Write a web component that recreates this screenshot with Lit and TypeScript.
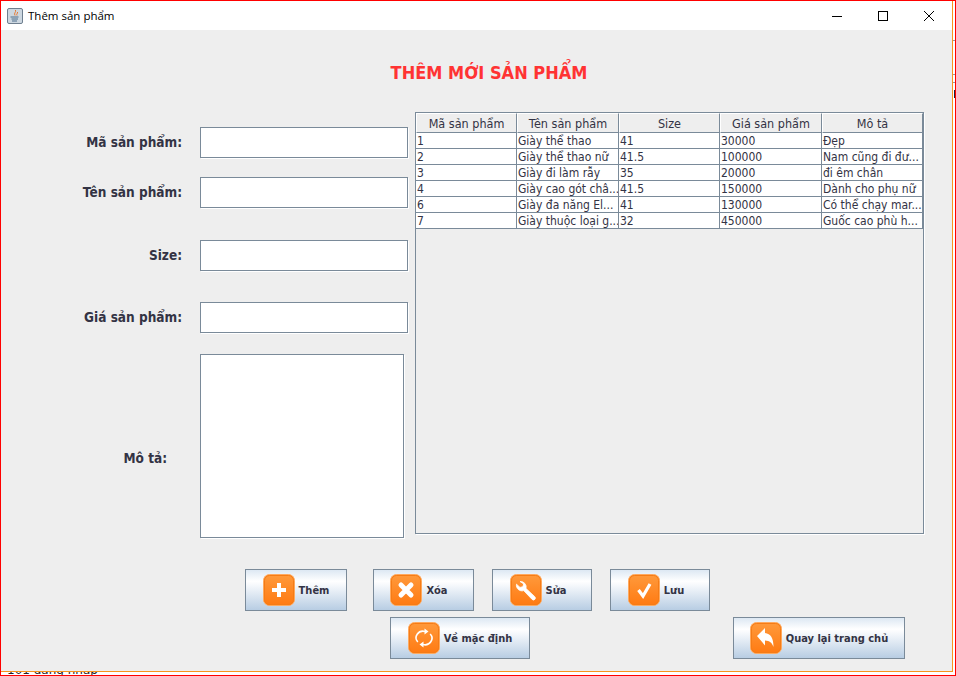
import { LitElement, html, css, svg } from 'lit';
import { customElement } from 'lit/decorators.js';

const ROWS = [
  ['1', 'Giày thể thao', '41', '30000', 'Đẹp'],
  ['2', 'Giày thể thao nữ', '41.5', '100000', 'Nam cũng đi đư...'],
  ['3', 'Giày đi làm rẫy', '35', '20000', 'đi êm chân'],
  ['4', 'Giày cao gót châ...', '41.5', '150000', 'Dành cho phụ nữ'],
  ['6', 'Giày đa năng El...', '41', '130000', 'Có thể chạy mar...'],
  ['7', 'Giày thuộc loại g...', '32', '450000', 'Guốc cao phù h...'],
];
const HEADERS = ['Mã sản phẩm', 'Tên sản phẩm', 'Size', 'Giá sản phẩm', 'Mô tả'];

const GLYPHS = {
  plus: svg`<path d="M9 14h5V9h4v5h5v4h-5v5h-4v-5H9z" fill="#fff"/>`,
  cross: svg`<path d="M11 11l10 10M21 11L11 21" stroke="#fff" stroke-width="5" stroke-linecap="round" fill="none"/>`,
  wrench: svg`<path d="M10 7.500a5.600 5.600 0 0 1 6 7l8.800 8.200a1.900 1.900 0 0 1-2.700 2.700l-8.400-8.800a5.600 5.600 0 0 1-7.200-6.400l3.500 3.200 2.900-.7.800-2.800z" fill="#fff" stroke="#fff" stroke-width=".8"/>`,
  check: svg`<path d="M10.500 16l4.500 6 7-12" stroke="#fff" stroke-width="3.200" fill="none"/>`,
  cycle: svg`<g fill="none" stroke="#fff" stroke-width="1.600"><path d="M9.800 20a7 6.500 0 0 1 7.200-10.500"/><path d="M22.200 12a7 6.500 0 0 1-7.200 10.500"/></g><path d="M16.500 6.500l4 3-4 3zM15.500 25.500l-4-3 4-3z" fill="#fff"/>`,
  back: svg`<path d="M7 14l8-8v5c5.500.5 8.500 5 8.500 14-1.500-4.500-3.800-6-8.500-6.500v5z" fill="#fff"/>`,
};

@customElement('app-root')
export class AppRoot extends LitElement {
  static styles = css`
    :host {
      display: block;
      position: relative;
      width: 956px;
      height: 676px;
      box-sizing: border-box;
      overflow: hidden;
      background: #fff;
      border: 1px solid #f00;
      font-family: "DejaVu Sans Condensed", "DejaVu Sans", sans-serif;
      font-stretch: condensed;
    }
    .window {
      position: relative;
      width: 952px;
      height: 671px;
      box-sizing: border-box;
      border-right: 1px solid #f7941d;
      border-bottom: 1px solid #f7941d;
      background: #eee;
      display: flex;
      flex-direction: column;
    }
    .titlebar {
      height: 29px;
      flex: none;
      background: #fff;
      display: flex;
      align-items: center;
      padding-left: 6px;
      font: 11.5px "Open Sans", sans-serif;
      color: #000;
    }
    .titlebar .app { width: 16px; height: 16px; margin-right: 5px; }
    .titlebar .name { flex: 1; }
    .winbtn { width: 46px; height: 29px; display: flex; align-items: center; justify-content: center; }
    .content { flex: 1; display: flex; flex-direction: column; }
    h1 {
      margin: 0;
      height: 82px;
      padding: 32px 0 0 25px;
      box-sizing: border-box;
      text-align: center;
      font-size: 18px;
      font-weight: bold;
      line-height: 22px;
      color: #ff3333;
    }
    .main { display: flex; height: 422px; }
    .form { width: 414px; flex: none; padding-top: 15px; box-sizing: border-box; }
    .field { display: flex; align-items: center; }
    .field label {
      width: 181px;
      margin-right: 18px;
      padding-bottom: 2px;
      text-align: right;
      font-size: 13.5px;
      font-weight: bold;
      color: #333344;
    }
    .input {
      width: 208px;
      height: 31px;
      box-sizing: border-box;
      background: #fff;
      border: 1px solid #7a8a99;
      box-shadow: 1px 1px 0 #fff;
    }
    .f2 { margin-top: 19px; }
    .f3 { margin-top: 32px; }
    .f4 { margin-top: 31px; }
    .f5 { margin-top: 21px; }
    .f5 label { width: 166px; margin-right: 33px; padding: 24px 0 0; }
    .f5 .input { width: 204px; height: 184px; }
    .table {
      width: 509px;
      height: 422px;
      box-sizing: border-box;
      border: 1px solid #7a8a99;
      align-self: flex-start;
      box-shadow: 1px 1px 0 #fff;
    }
    .grid { display: grid; grid-template-columns: 101px 102px 101px 102px 101px; }
    .th {
      height: 20px;
      box-sizing: border-box;
      background: #eee;
      border-right: 1px solid #7a8a99;
      border-bottom: 1px solid #7a8a99;
      border-top: 1px solid #fff;
      border-left: 1px solid #fff;
      text-align: center;
      font-size: 12.5px;
      line-height: 19px;
      color: #333344;
      white-space: nowrap;
    }
    .td {
      height: 16px;
      box-sizing: border-box;
      background: #fff;
      border-right: 1px solid #7a8a99;
      border-bottom: 1px solid #7a8a99;
      padding-left: 1px;
      font-size: 12px;
      line-height: 17px;
      color: #333344;
      white-space: nowrap;
      overflow: hidden;
    }
    .actions { display: flex; flex-direction: column; padding-top: 35px; gap: 6px; }
    .row { display: flex; }
    .r1 { padding-left: 244px; gap: 18px; }
    .r2 { padding-left: 389px; gap: 203px; }
    .xoa { margin-left: 8px; padding-right: 9px; }
    .short { padding-right: 8px; }
    .btn {
      height: 42px;
      box-sizing: border-box;
      border: 1px solid #7a8a99;
      background: linear-gradient(#dde8f3 0%, #fff 28%, #f4f7fb 40%, #b8cde3 100%);
      display: flex;
      align-items: center;
      justify-content: center;
      gap: 4px;
      font-size: 11px;
      font-weight: bold;
      color: #333344;
    }
    .btn svg { width: 32px; height: 32px; flex: none; }
    .behind {
      position: absolute;
      left: 6px;
      top: 662px;
      font: 12px "DejaVu Sans", sans-serif;
      color: #222;
      white-space: nowrap;
    }
    .tick { position: absolute; left: 952px; width: 3px; height: 1px; background: #999; }
    .t1 { top: 39px; }
    .t2 { top: 73px; }
    .t3 { top: 81px; }
    .t4 { top: 89px; height: 8px; width: 1px; left: 953px; background: #223; }
  `;

  private icon(name: keyof typeof GLYPHS) {
    return html`<svg viewBox="0 0 32 32">
      <defs>
        <linearGradient id="o" x1="0" y1="0" x2="0" y2="1">
          <stop offset="0" stop-color="#ff9a3c" />
          <stop offset="1" stop-color="#ff7a12" />
        </linearGradient>
      </defs>
      <rect x=".5" y=".5" width="31" height="31" rx="6" fill="url(#o)" stroke="#ffa95e" />
      <rect x="1.500" y="1.500" width="29" height="29" rx="5" fill="none" stroke="#f57c17" />
      ${GLYPHS[name]}
    </svg>`;
  }

  private button(label: string, name: keyof typeof GLYPHS, width: number, cls = '') {
    return html`<div class="btn ${cls}" style="width:${width}px">${this.icon(name)}<span>${label}</span></div>`;
  }

  render() {
    return html`
      <div class="behind">101 đăng nhập</div>
      <div class="tick t1"></div>
      <div class="tick t2"></div>
      <div class="tick t3"></div>
      <div class="tick t4"></div>
      <div class="window">
        <div class="titlebar">
          <svg class="app" viewBox="0 0 16 16">
            <rect x=".5" y=".5" width="15" height="15" rx="1.500" fill="#cdd7e0" stroke="#6f7f8f" />
            <path d="M8.500 2c1 2-2 3-.5 5.500M10.500 4c.5 1.500-1.500 2-.5 3.500" stroke="#e8772e" fill="none" />
            <path d="M3.500 9h8M4.500 11h6.500M5 13h5" stroke="#4f6f8c" fill="none" />
          </svg>
          <span class="name">Thêm sản phẩm</span>
          <div class="winbtn">
            <svg width="10" height="10" viewBox="0 0 10 10"><path d="M0 5.500h10" stroke="#000" fill="none" /></svg>
          </div>
          <div class="winbtn">
            <svg width="10" height="10" viewBox="0 0 10 10"><rect x=".5" y=".5" width="9" height="9" stroke="#000" fill="none" /></svg>
          </div>
          <div class="winbtn">
            <svg width="10" height="10" viewBox="0 0 10 10"><path d="M0 0l10 10M10 0L0 10" stroke="#000" fill="none" /></svg>
          </div>
        </div>
        <div class="content">
          <h1>THÊM MỚI SẢN PHẨM</h1>
          <div class="main">
            <div class="form">
              <div class="field"><label>Mã sản phẩm:</label><div class="input"></div></div>
              <div class="field f2"><label>Tên sản phẩm:</label><div class="input"></div></div>
              <div class="field f3"><label>Size:</label><div class="input"></div></div>
              <div class="field f4"><label>Giá sản phẩm:</label><div class="input"></div></div>
              <div class="field f5"><label>Mô tả:</label><div class="input"></div></div>
            </div>
            <div class="table">
              <div class="grid">
                ${HEADERS.map((h) => html`<div class="th">${h}</div>`)}
                ${ROWS.map((r) => r.map((c) => html`<div class="td">${c}</div>`))}
              </div>
            </div>
          </div>
          <div class="actions">
            <div class="row r1">
              ${this.button('Thêm', 'plus', 102)}
              ${this.button('Xóa', 'cross', 101, 'xoa')}
              ${this.button('Sửa', 'wrench', 100, 'short')}
              ${this.button('Lưu', 'check', 100, 'short')}
            </div>
            <div class="row r2">
              ${this.button('Về mặc định', 'cycle', 140)}
              ${this.button('Quay lại trang chủ', 'back', 172)}
            </div>
          </div>
        </div>
      </div>
    `;
  }
}
